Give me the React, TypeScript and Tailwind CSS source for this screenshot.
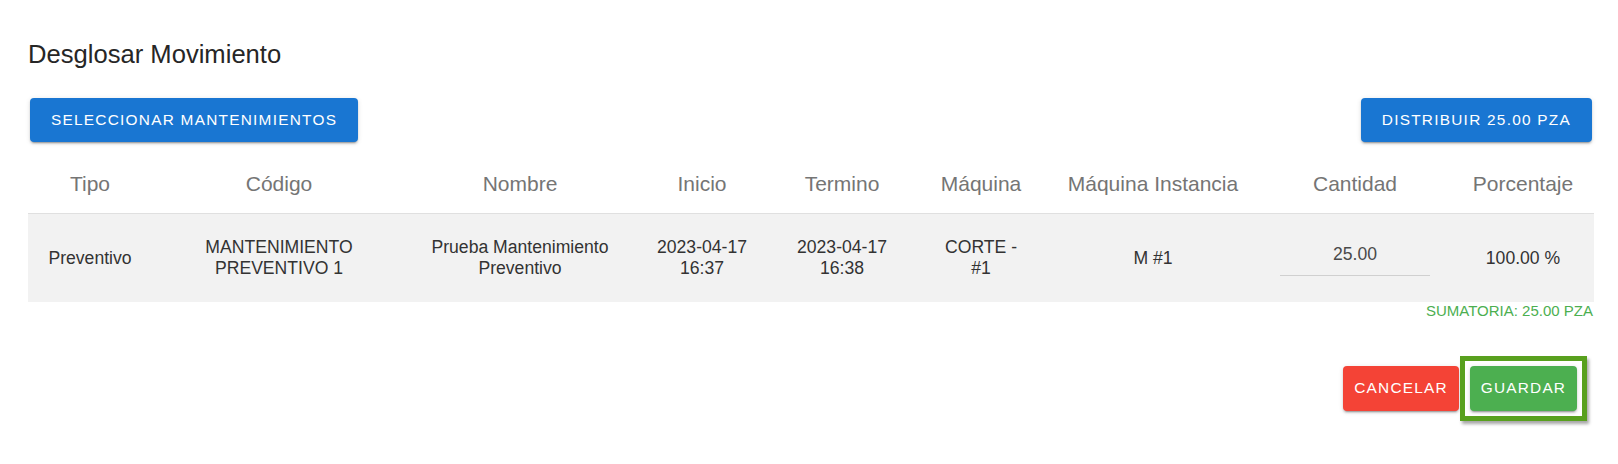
const columns = [
  { label: 'Tipo', width: 'w-[124px]' },
  { label: 'Código', width: 'w-[254px]' },
  { label: 'Nombre', width: 'w-[228px]' },
  { label: 'Inicio', width: 'w-[136px]' },
  { label: 'Termino', width: 'w-[144px]' },
  { label: 'Máquina', width: 'w-[134px]' },
  { label: 'Máquina Instancia', width: 'w-[210px]' },
  { label: 'Cantidad', width: 'w-[194px]' },
  { label: 'Porcentaje', width: 'w-[142px]' },
];

const btnShadow =
  'shadow-[0_3px_1px_-2px_rgba(0,0,0,0.2),0_2px_2px_0_rgba(0,0,0,0.14),0_1px_5px_0_rgba(0,0,0,0.12)]';

const App = () => {
  return (
    <div className="min-h-screen bg-white pl-[28px] pr-[24px] text-[#333] [font-family:'Liberation_Sans',Arial,sans-serif]">
      {/* Title */}
      <h2 className="pt-[40px] text-[25.6px] leading-[29px] text-[#262626] font-normal">
        Desglosar Movimiento
      </h2>

      {/* Action buttons */}
      <div className="mt-[29px] mx-[2px] flex justify-between">
        <button
          className={`h-[44px] px-[21px] rounded-[4px] bg-[#1976d2] text-white uppercase text-[15.4px] tracking-[1.25px] ${btnShadow}`}
        >
          Seleccionar Mantenimientos
        </button>
        <button
          className={`h-[44px] px-[21px] rounded-[4px] bg-[#1976d2] text-white uppercase text-[15.4px] tracking-[1.25px] ${btnShadow}`}
        >
          Distribuir 25.00 PZA
        </button>
      </div>

      {/* Table */}
      <table className="w-full table-fixed border-collapse">
        <colgroup>
          {columns.map((c) => (
            <col key={c.label} className={c.width} />
          ))}
        </colgroup>
        <thead>
          <tr className="border-b border-[#e0e0e0]">
            {columns.map((c) => (
              <th
                key={c.label}
                className="pt-[30px] pb-[17px] text-[21px] leading-[24px] font-normal text-[#757575] text-center whitespace-nowrap"
              >
                {c.label}
              </th>
            ))}
          </tr>
        </thead>
        <tbody>
          <tr className="bg-[#f2f2f2] h-[88px] text-[17.6px] leading-[20.5px] text-center align-middle">
            <td>Preventivo</td>
            <td>
              MANTENIMIENTO
              <br />
              PREVENTIVO 1
            </td>
            <td>
              Prueba Mantenimiento
              <br />
              Preventivo
            </td>
            <td>
              2023-04-17
              <br />
              16:37
            </td>
            <td>
              2023-04-17
              <br />
              16:38
            </td>
            <td>
              CORTE -
              <br />
              #1
            </td>
            <td>M #1</td>
            <td>
              <div className="mx-auto w-[150px] pt-[4px] pb-[10px] border-b border-[#d0d0d0] text-[#4a4a4a]">
                25.00
              </div>
            </td>
            <td>100.00 %</td>
          </tr>
        </tbody>
      </table>

      <div className="text-right pr-[1px] text-[15px] leading-[17px] text-[#4caf50]">
        SUMATORIA: 25.00 PZA
      </div>

      {/* Footer buttons */}
      <div className="mt-[37px] pr-[7px] flex justify-end items-center">
        <button
          className={`mr-[1px] h-[45px] w-[116px] rounded-[4px] bg-[#f44336] text-white uppercase text-[15.4px] tracking-[1.2px] ${btnShadow}`}
        >
          Cancelar
        </button>
        <div className="border-[5px] border-[#58a01e] p-[5px] shadow-[2px_3px_3px_rgba(0,0,0,0.35)]">
          <button
            className={`block h-[45px] w-[107px] rounded-[4px] bg-[#4caf50] text-white uppercase text-[15.4px] tracking-[1.2px] ${btnShadow}`}
          >
            Guardar
          </button>
        </div>
      </div>
    </div>
  );
};

export default App;
